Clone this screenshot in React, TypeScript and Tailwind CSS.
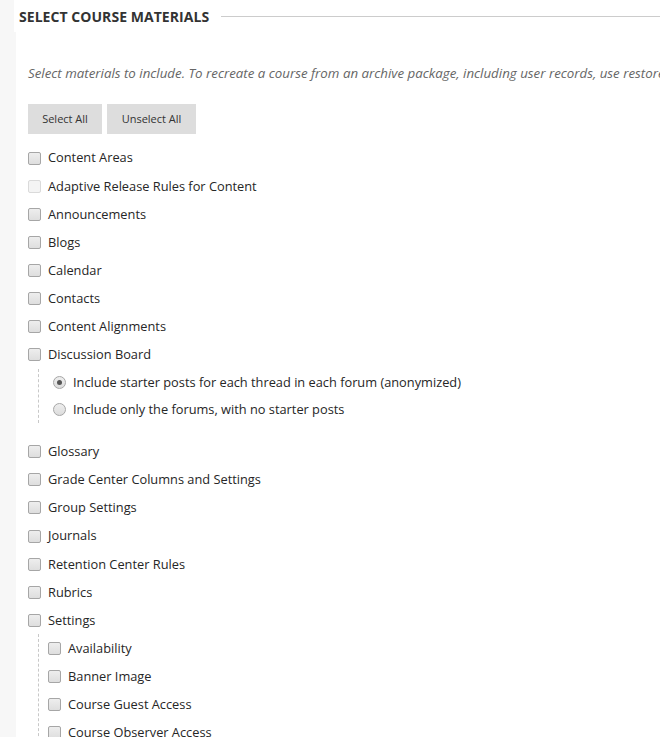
import React from "react";

type Item = {
  label: string;
  disabled?: boolean;
  radios?: { label: string; checked?: boolean }[];
  children?: string[];
};

const items: Item[] = [
  { label: "Content Areas" },
  { label: "Adaptive Release Rules for Content", disabled: true },
  { label: "Announcements" },
  { label: "Blogs" },
  { label: "Calendar" },
  { label: "Contacts" },
  { label: "Content Alignments" },
  {
    label: "Discussion Board",
    radios: [
      { label: "Include starter posts for each thread in each forum (anonymized)", checked: true },
      { label: "Include only the forums, with no starter posts" },
    ],
  },
  { label: "Glossary" },
  { label: "Grade Center Columns and Settings" },
  { label: "Group Settings" },
  { label: "Journals" },
  { label: "Retention Center Rules" },
  { label: "Rubrics" },
  {
    label: "Settings",
    children: ["Availability", "Banner Image", "Course Guest Access", "Course Observer Access"],
  },
];

const Box = ({ disabled }: { disabled?: boolean }) => (
  <span
    className={
      disabled
        ? "w-[13px] h-[13px] rounded-[2px] border border-[#dadada] bg-[#f4f4f4] shrink-0"
        : "w-[13px] h-[13px] rounded-[2px] border border-[#a6a6a6] bg-gradient-to-b from-[#eeeeee] to-[#dedede] shrink-0"
    }
  />
);

const Radio = ({ checked }: { checked?: boolean }) => (
  <span className="w-[13px] h-[13px] rounded-full border border-[#a6a6a6] bg-gradient-to-b from-[#eeeeee] to-[#dcdcdc] shrink-0 flex items-center justify-center">
    {checked && <span className="w-[5px] h-[5px] rounded-full bg-[#555]" />}
  </span>
);

export default function App() {
  return (
    <div
      className="w-[660px] h-[737px] overflow-hidden flex bg-white text-[#262626]"
      style={{ fontFamily: '"Open Sans", sans-serif' }}
    >
      <div className="w-[16px] shrink-0 bg-[#f7f7f7]" />
      <div className="flex-1 min-w-0">
        <div className="-ml-[2px] pl-[5px] h-[32px] flex items-center bg-white">
          <h2 className="text-[14px] font-bold uppercase text-[#333] whitespace-nowrap tracking-[0.05px]">
            Select Course Materials
          </h2>
          <div className="flex-1 ml-[12px] h-px bg-[#cccccc]" />
        </div>
        <div className="pl-[12px]">
          <p className="mt-[32px] text-[13.3px] italic text-[#666] whitespace-nowrap leading-[18px]">
            Select materials to include. To recreate a course from an archive package, including user records, use restore.
          </p>
          <div className="mt-[22px] flex gap-[5px]">
            <button className="w-[74px] h-[30px] bg-[#dddddd] text-[11px] text-[#333]">Select All</button>
            <button className="w-[89px] h-[30px] bg-[#dddddd] text-[11px] text-[#333]">Unselect All</button>
          </div>
          <ul className="mt-[10px] text-[12.8px]">
            {items.map((it) => (
              <li key={it.label}>
                <div className="h-[28.1px] flex items-center gap-[7px]">
                  <Box disabled={it.disabled} />
                  <span>{it.label}</span>
                </div>
                {it.radios && (
                  <ul className="ml-[10px] pl-[14px] border-l border-dashed border-[#c8c8c8] mb-[15px]">
                    {it.radios.map((r) => (
                      <li key={r.label} className="h-[27px] flex items-center gap-[7px]">
                        <Radio checked={r.checked} />
                        <span>{r.label}</span>
                      </li>
                    ))}
                  </ul>
                )}
                {it.children && (
                  <ul className="ml-[10px] pl-[9px] border-l border-dashed border-[#c8c8c8]">
                    {it.children.map((c) => (
                      <li key={c} className="h-[28px] flex items-center gap-[7px]">
                        <Box />
                        <span>{c}</span>
                      </li>
                    ))}
                  </ul>
                )}
              </li>
            ))}
          </ul>
        </div>
      </div>
    </div>
  );
}
